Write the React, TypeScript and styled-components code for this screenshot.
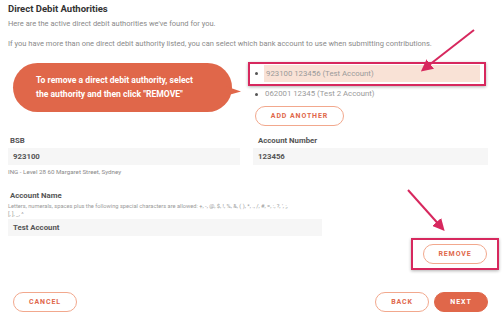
import React from 'react';
import styled, { createGlobalStyle } from 'styled-components';

const GlobalStyle = createGlobalStyle`
  html, body {
    margin: 0;
    padding: 0;
    background: #ffffff;
  }
  * {
    box-sizing: border-box;
  }
`;

const App: React.FC = () => {
  return (
    <Page>
      <GlobalStyle />
      <Title>Direct Debit Authorities</Title>
      <Intro>Here are the active direct debit authorities we've found for you.</Intro>
      <Info>
        If you have more than one direct debit authority listed, you can select which bank account to use when
        submitting contributions.
      </Info>

      <SelectRow>
        <Bubble>
          To remove a direct debit authority, select
          <br />
          the authority and then click "REMOVE"
        </Bubble>
        <ListColumn>
          <Highlight>
            <ListItem selected>923100 123456 (Test Account)</ListItem>
          </Highlight>
          <ListItem>062001 12345 (Test 2 Account)</ListItem>
          <AddButton width={89}>ADD ANOTHER</AddButton>
        </ListColumn>
      </SelectRow>

      <FieldGrid>
        <Field>
          <Label>BSB</Label>
          <Input>923100</Input>
          <Note>ING - Level 28 60 Margaret Street, Sydney</Note>
        </Field>
        <Field>
          <Label indent={3}>Account Number</Label>
          <Input>123456</Input>
        </Field>
      </FieldGrid>

      <NameField>
        <Label>Account Name</Label>
        <Hint>
          Letters, numerals, spaces plus the following special characters are allowed: +, -, @, $, !, %, &amp;, ( ), *, ., /, #, =, :, ?, ', ;,
          <br />
          [, ], _, ^
        </Hint>
        <Input>Test Account</Input>
      </NameField>

      <RemoveRow>
        <RemoveFrame>
          <OutlineButton width={64}>REMOVE</OutlineButton>
        </RemoveFrame>
      </RemoveRow>

      <Footer>
        <OutlineButton width={64}>CANCEL</OutlineButton>
        <FooterRight>
          <OutlineButton width={54}>BACK</OutlineButton>
          <FilledButton>NEXT</FilledButton>
        </FooterRight>
      </Footer>

      <Annotations width="504" height="321" viewBox="0 0 504 321">
        <defs>
          <marker id="head" markerWidth="6" markerHeight="6" refX="4" refY="3" orient="auto" markerUnits="strokeWidth">
            <path d="M0,0 L6,3 L0,6 Z" fill="#d7285e" />
          </marker>
        </defs>
        <line x1="474" y1="30" x2="424" y2="69" stroke="#d7285e" strokeWidth="2" markerEnd="url(#head)" />
        <line x1="408" y1="190" x2="442" y2="228" stroke="#d7285e" strokeWidth="2" markerEnd="url(#head)" />
      </Annotations>
    </Page>
  );
};

export default App;

const Page = styled.div`
  position: relative;
  width: 504px;
  height: 321px;
  padding: 3px 8px 0 8px;
  font-family: Roboto, 'Liberation Sans', sans-serif;
  color: #444;
  overflow: hidden;
`;

const Title = styled.div`
  font-size: 9.5px;
  font-weight: 700;
  color: #333;
  line-height: 12px;
`;

const Intro = styled.div`
  margin-top: 4px;
  font-size: 7.5px;
  color: #8a8a8a;
  line-height: 10px;
`;

const Info = styled(Intro)`
  margin-top: 10px;
`;

const SelectRow = styled.div`
  display: flex;
  align-items: flex-start;
  margin-top: 13px;
`;

const Bubble = styled.div`
  position: relative;
  margin-left: 5px;
  margin-top: 1px;
  width: 219px;
  height: 49px;
  border-radius: 25px;
  background: #e0674a;
  color: #ffffff;
  font-size: 8.6px;
  font-weight: 700;
  line-height: 14px;
  padding: 10px 0 0 23px;

  &::after {
    content: '';
    position: absolute;
    right: -9px;
    top: 23px;
    width: 16px;
    height: 10px;
    background: #e0674a;
    clip-path: polygon(0 0, 100% 55%, 0 100%);
  }
`;

const ListColumn = styled.div`
  display: flex;
  flex-direction: column;
  align-items: flex-start;
  margin-left: 16px;
`;

const Highlight = styled.div`
  width: 238px;
  height: 24px;
  border: 2px solid #d7285e;
  box-shadow: 0 1px 3px rgba(0, 0, 0, 0.3);
  padding: 1px 4px 0 14px;
`;

const ListItem = styled.div<{ selected?: boolean }>`
  position: relative;
  height: ${p => (p.selected ? '17px' : '16px')};
  width: ${p => (p.selected ? '216px' : 'auto')};
  padding-left: ${p => (p.selected ? '2px' : '17px')};
  background: ${p => (p.selected ? '#f9e2d6' : 'transparent')};
  font-size: 7.8px;
  line-height: ${p => (p.selected ? '17px' : '16px')};
  color: #9a9a9a;

  &::before {
    content: '';
    position: absolute;
    left: ${p => (p.selected ? '-9px' : '7px')};
    top: 7px;
    width: 3px;
    height: 3px;
    border-radius: 50%;
    background: #555;
  }
`;

const OutlineButton = styled.div<{ width: number }>`
  width: ${p => p.width}px;
  height: 20px;
  border: 1.5px solid #f2a88d;
  border-radius: 10px;
  display: flex;
  align-items: center;
  justify-content: center;
  font-size: 7px;
  font-weight: 700;
  letter-spacing: 0.9px;
  color: #e0674a;
  background: #ffffff;
`;

const AddButton = styled(OutlineButton)`
  margin-top: 4px;
  margin-left: 7px;
`;

const FilledButton = styled(OutlineButton).attrs({ width: 54 })`
  background: #e0674a;
  border-color: #e0674a;
  color: #ffffff;
`;

const FieldGrid = styled.div`
  display: grid;
  grid-template-columns: 232px 235px;
  column-gap: 13px;
  margin-top: 10px;
`;

const Field = styled.div`
  display: flex;
  flex-direction: column;
`;

const Label = styled.div<{ indent?: number }>`
  font-size: 7.8px;
  font-weight: 700;
  color: #555;
  line-height: 10px;
  padding-left: ${p => 2 + (p.indent || 0)}px;
`;

const Input = styled.div`
  margin-top: 2px;
  height: 17px;
  background: #f6f6f6;
  padding-left: 5px;
  font-size: 7.8px;
  font-weight: 700;
  color: #555;
  line-height: 17px;
`;

const Note = styled.div`
  margin-top: 2px;
  font-size: 6.2px;
  color: #8a8a8a;
  line-height: 10px;
`;

const NameField = styled.div`
  width: 314px;
  margin-top: 14px;
  display: flex;
  flex-direction: column;
`;

const Hint = styled.div`
  font-size: 5.7px;
  color: #9a9a9a;
  line-height: 8px;
  white-space: nowrap;
  margin-top: 1px;
  margin-bottom: -1px;
`;

const RemoveRow = styled.div`
  display: flex;
  justify-content: flex-end;
  margin-top: 2px;
  margin-right: -3px;
`;

const RemoveFrame = styled.div`
  width: 88px;
  height: 32px;
  border: 2px solid #d7285e;
  box-shadow: 0 1px 3px rgba(0, 0, 0, 0.3);
  display: flex;
  align-items: center;
  justify-content: center;
`;

const Footer = styled.div`
  display: flex;
  justify-content: space-between;
  margin-top: 22px;
  padding: 0 8px 0 5px;
`;

const FooterRight = styled.div`
  display: flex;
  gap: 5px;
`;

const Annotations = styled.svg`
  position: absolute;
  left: 0;
  top: 0;
  pointer-events: none;
`;
